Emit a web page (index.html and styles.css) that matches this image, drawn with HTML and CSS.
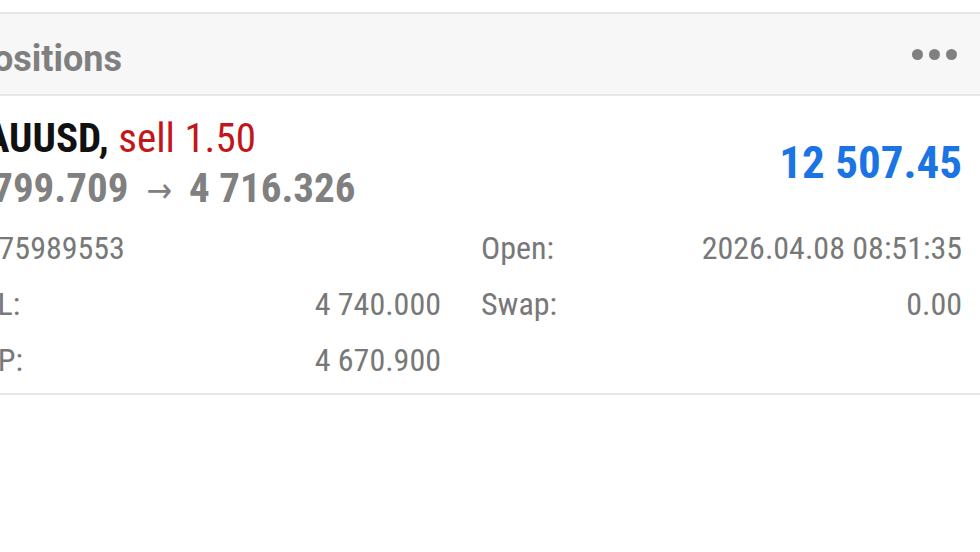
FILE: index.html
```html
<!DOCTYPE html>
<html lang="en">
<head>
<meta charset="utf-8">
<title>Positions</title>
<link rel="stylesheet" href="styles.css">
</head>
<body>
<div class="screen">
  <header class="toolbar">
    <h1 class="title">Positions</h1>
    <button class="more" type="button" aria-label="More"><span class="dot"></span><span class="dot"></span><span class="dot"></span></button>
  </header>
  <section class="position">
    <div class="summary">
      <div class="lines">
        <div class="symbol">XAUUSD, <span class="sell">sell 1.50</span></div>
        <div class="prices">4 799.709<span class="arrow">→</span>4 716.326</div>
      </div>
      <div class="profit">12 507.45</div>
    </div>
    <div class="details">
      <div class="field"><span>#75989553</span><span></span></div>
      <div class="field"><span>Open:</span><span>2026.04.08 08:51:35</span></div>
      <div class="field"><span>SL:</span><span>4 740.000</span></div>
      <div class="field"><span>Swap:</span><span>0.00</span></div>
      <div class="field"><span>TP:</span><span>4 670.900</span></div>
    </div>
  </section>
</div>
</body>
</html>
```

FILE: styles.css
```css
html, body {
  margin: 0;
  background: #ffffff;
}

body {
  width: 980px;
  height: 552px;
  overflow: hidden;
  font-family: "Roboto Condensed", "Liberation Sans Narrow", "DejaVu Sans Condensed", Roboto, sans-serif;
  font-stretch: condensed;
}

.screen {
  padding-top: 12px;
}

.toolbar {
  display: flex;
  align-items: center;
  justify-content: space-between;
  height: 80px;
  margin-left: -30px;
  padding: 0 23px 0 0;
  background: #f7f7f7;
  border-top: 2px solid #e6e6e6;
  border-bottom: 2px solid #e6e6e6;
}

.title {
  margin: 0;
  padding-top: 10px;
  font-family: Roboto, "Noto Sans", sans-serif;
  font-stretch: normal;
  font-size: 36px;
  line-height: 44px;
  font-weight: 700;
  color: #7f7f7f;
}

.more {
  display: flex;
  gap: 6px;
  padding: 0;
  border: 0;
  background: transparent;
}

.dot {
  width: 11px;
  height: 11px;
  border-radius: 50%;
  background: #808080;
}

.position {
  margin-left: -38px;
  padding: 17px 18px 5px 0;
  border-bottom: 2px solid #e6e6e6;
}

.summary {
  display: flex;
  align-items: center;
  justify-content: space-between;
}

.lines {
  font-size: 41px;
  line-height: 50px;
  font-weight: 700;
}

.symbol {
  color: #111111;
}

.sell {
  color: #c2161b;
  font-weight: 400;
}

.prices {
  color: #808080;
}

.arrow {
  margin: 0 17px 0 18px;
  font-size: 34px;
  font-weight: 400;
}

.profit {
  margin-top: -4px;
  font-size: 45px;
  line-height: 1;
  font-weight: 700;
  color: #1b74e4;
}

.details {
  display: grid;
  grid-template-columns: 460px 1fr;
  column-gap: 40px;
  margin: 5px 0 0 19px;
  font-size: 32px;
  line-height: 56px;
  color: #787878;
}

.field {
  display: flex;
  justify-content: space-between;
}
```
